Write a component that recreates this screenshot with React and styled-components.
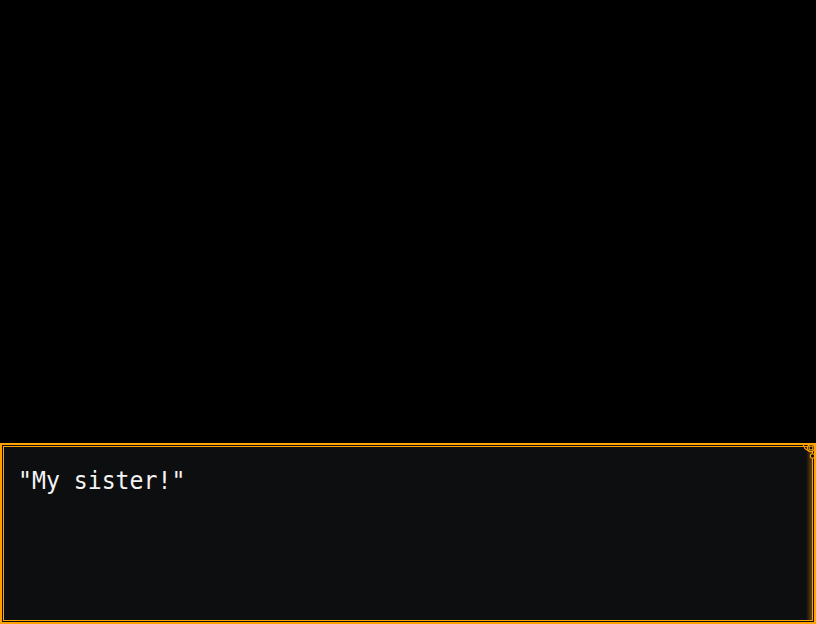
import styled, { createGlobalStyle } from "styled-components";

const GlobalStyle = createGlobalStyle`
  html, body {
    margin: 0;
    padding: 0;
    background: #000;
    overflow: hidden;
  }
  #root {
    height: 624px;
  }
`;

const Screen = styled.div`
  width: 816px;
  height: 624px;
  background: #000;
  display: flex;
  flex-direction: column;
`;

const Stage = styled.div`
  flex: 1;
`;

const MessageWindow = styled.div`
  position: relative;
  height: 181px;
  box-sizing: border-box;
  border: 2px solid #ffa200;
  background: #0c0d0f;
  padding: 1px;
`;

const Inner = styled.div`
  height: 100%;
  box-sizing: border-box;
  border: 1px solid #ffa200;
  background:
    linear-gradient(to left, rgba(130, 82, 8, 0.75), rgba(130, 82, 8, 0) 6px),
    #0d0e10;
  padding: 17px 14px;
`;

const MessageText = styled.p`
  margin: 0;
  display: inline-block;
  font-family: "DejaVu Sans Mono", "Liberation Mono", monospace;
  font-size: 24px;
  line-height: 34px;
  color: #f4f4f4;
  white-space: pre;
  transform: scaleX(0.965);
  transform-origin: left center;
`;

const CornerMark = styled.svg`
  position: absolute;
  top: -2px;
  right: -2px;
  width: 18px;
  height: 18px;
`;

const Ornament = () => (
  <CornerMark viewBox="0 0 18 18">
    <path
      d="M0 1.5 H4.5 Q5.5 1.5 5.8 3 Q6.3 6 9 7 Q10.5 7.5 10.8 8.5"
      fill="none"
      stroke="#ffa200"
      strokeWidth="1.2"
    />
    <circle cx="13" cy="5" r="3.6" fill="#0c0d0f" stroke="#ffa200" strokeWidth="1.2" />
    <rect x="11.2" y="3.2" width="3.6" height="3.6" fill="none" stroke="#ffa200" strokeWidth="1.1" />
    <circle cx="14.5" cy="13" r="2.2" fill="#0c0d0f" stroke="#ffa200" strokeWidth="1.1" />
    <path d="M17 0 V18" stroke="#ffa200" strokeWidth="2" />
  </CornerMark>
);

export default function App() {
  return (
    <>
      <GlobalStyle />
      <Screen>
        <Stage />
        <MessageWindow>
          <Inner>
            <MessageText>"My sister!"</MessageText>
          </Inner>
          <Ornament />
        </MessageWindow>
      </Screen>
    </>
  );
}
